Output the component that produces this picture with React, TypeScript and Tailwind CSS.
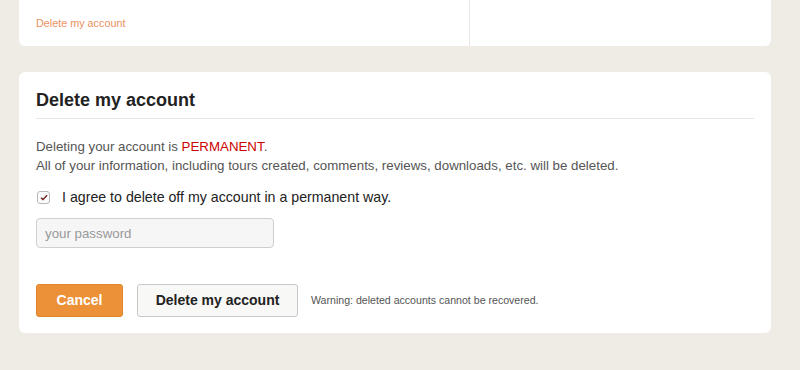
import React from "react";

const font = { fontFamily: '"Liberation Sans", Arial, sans-serif' };

const TopCard: React.FC = () => (
  <div className="ml-[19px] w-[752px] -mt-[20px] h-[66px] bg-white rounded-b-[6px] flex">
    <div className="w-[451px] border-r border-[#e8e6e1] flex items-end pl-[17px] pb-[17px]">
      <a className="text-[10.8px] text-[#ec8f5e] leading-none">Delete my account</a>
    </div>
    <div className="flex-1" />
  </div>
);

const DeleteCard: React.FC = () => {
  const [agree, setAgree] = React.useState(true);
  return (
    <div className="ml-[19px] w-[752px] mt-[26px] h-[261px] bg-white rounded-[6px] px-[17px] pt-[18px]">
      <h2 className="text-[18px] font-bold text-[#222] leading-[20px] pb-[8px] border-b border-[#e6e6e6]">
        Delete my account
      </h2>
      <p className="mt-[18px] text-[13.3px] leading-[19px] text-[#555]">
        Deleting your account is <span className="text-[#cc0000]">PERMANENT</span>.
        <br />
        All of your information, including tours created, comments, reviews, downloads, etc. will be deleted.
      </p>
      <label className="mt-[12px] flex items-center gap-[12px] cursor-pointer">
        <span
          onClick={() => setAgree(!agree)}
          className="ml-[1px] w-[13px] h-[13px] border border-[#b9b9b9] rounded-[3px] bg-[#fafafa] flex items-center justify-center"
        >
          {agree && (
            <svg width="8" height="7" viewBox="0 0 8 7">
              <path d="M1 3.8 L3 5.6 L7 1.2" stroke="#6a1a1a" strokeWidth="1.4" fill="none" />
            </svg>
          )}
        </span>
        <span className="text-[14.2px] text-[#222]">I agree to delete off my account in a permanent way.</span>
      </label>
      <input
        type="password"
        placeholder="your password"
        className="mt-[10px] block w-[238px] h-[30px] rounded-[4px] border border-[#cfcfcf] bg-[#f6f6f6] px-[8px] text-[13.3px] text-[#333] placeholder:text-[#999] outline-none"
        style={font}
      />
      <div className="mt-[36px] flex items-center">
        <button
          className="w-[87px] h-[33px] rounded-[3px] bg-[#ec9137] border border-[#e08628] text-white text-[14px] font-bold"
          style={font}
        >
          Cancel
        </button>
        <button
          className="ml-[14px] w-[161px] h-[33px] rounded-[3px] bg-[#f8f8f6] border border-[#c8c8c8] text-[#222] text-[14px] font-bold"
          style={font}
        >
          Delete my account
        </button>
        <span className="ml-[13px] text-[10.6px] text-[#555]">Warning: deleted accounts cannot be recovered.</span>
      </div>
    </div>
  );
};

export default function App() {
  return (
    <div className="w-[800px] h-[370px] bg-[#efece5] overflow-hidden" style={font}>
      <TopCard />
      <DeleteCard />
    </div>
  );
}
